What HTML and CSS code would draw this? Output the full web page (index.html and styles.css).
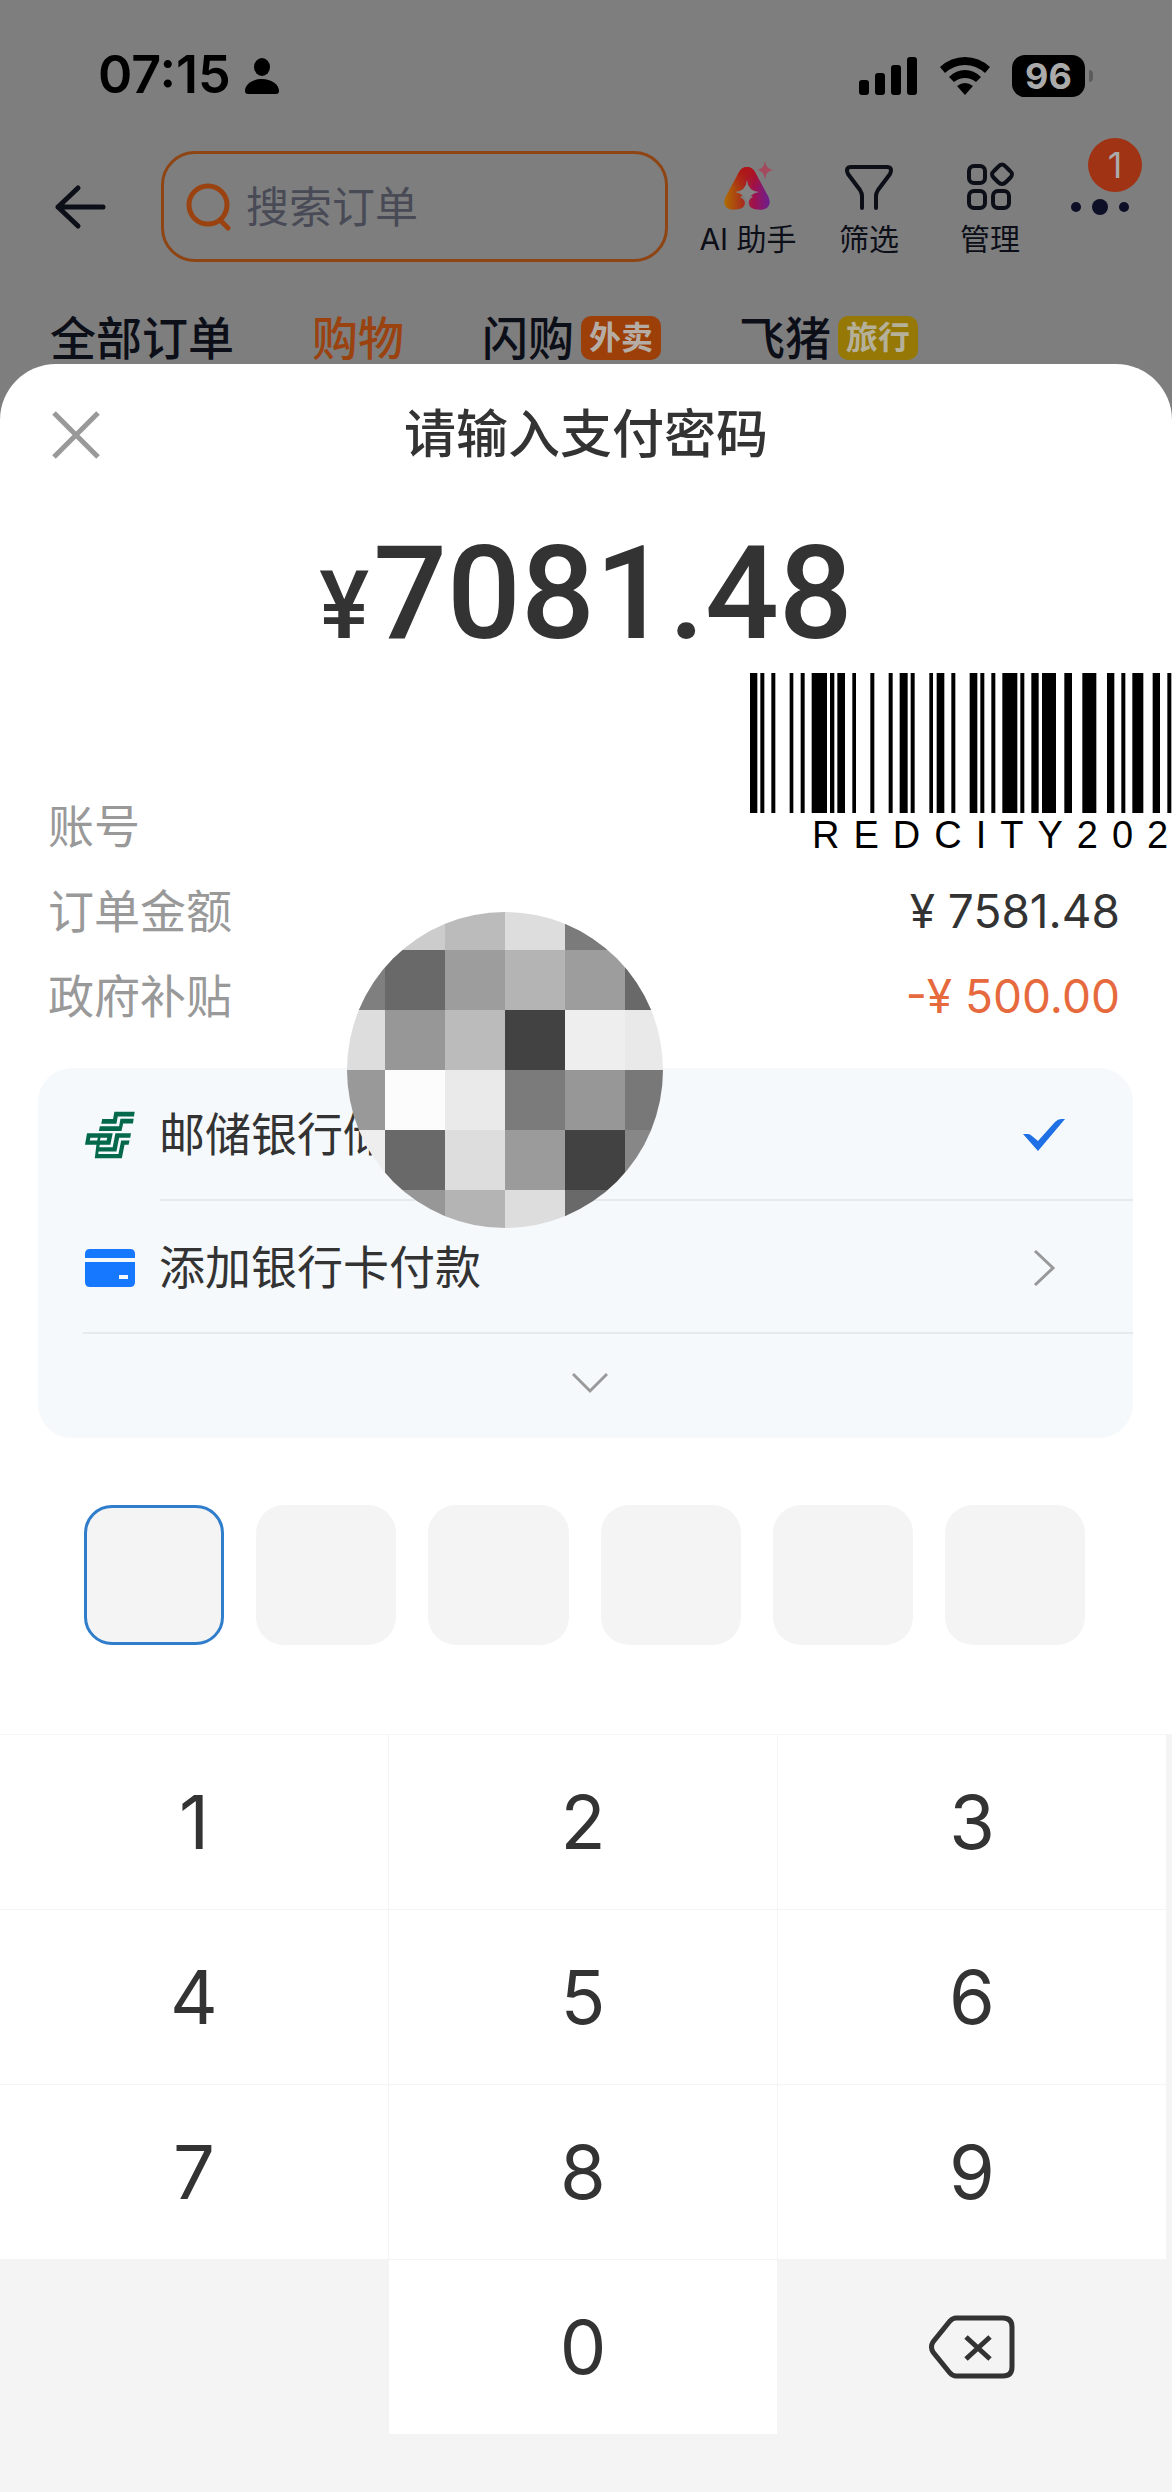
FILE: index.html
```
<!DOCTYPE html>
<html lang="zh-CN">
    <head>
        <meta charset="UTF-8">
        <meta name="viewport" content="width=device-width, initial-scale=1">
        <title>请输入支付密码</title>
        <link rel="stylesheet" href="styles.css">
    </head>
    <body>
        <header class="orders">
            <div class="status">
                <span class="time">07:15</span>
                <svg class="person" width="34" height="36" viewBox="0 0 34 36"><ellipse cx="17" cy="9" rx="8" ry="9"/><path d="M3 36Q0 36 0 33C0 26 8 21 17 21S34 26 34 33Q34 36 31 36Z"/></svg>
                <div class="status-right">
                    <svg width="59" height="38" viewBox="0 0 59 38"><rect x="0" y="23" width="10" height="15" rx="3"/><rect x="16" y="16" width="10" height="22" rx="3"/><rect x="32" y="8" width="10" height="30" rx="3"/><rect x="48" y="0" width="10" height="38" rx="3"/></svg>
                    <svg width="50" height="38" viewBox="0 0 50 38"><path d="M0 10Q11 0 25 0T50 10L45 16Q36 8 25 8T5 16Z"/><path d="M9 20Q16 13 25 13T41 20L36 25Q31 21 25 21T14 25Z"/><path d="M17 29Q25 23 33 29L25 38Z"/></svg>
                    <span class="battery">96</span>
                </div>
            </div>
            <div class="bar">
                <button class="icon-btn" aria-label="返回">
                    <svg width="54" height="46" viewBox="0 0 54 46" fill="none" stroke="#0c0e18" stroke-width="5" stroke-linecap="round" stroke-linejoin="round"><path d="M50 23H5M25 4L5 23L25 42"/></svg>
                </button>
                <label class="search">
                    <svg width="46" height="48" viewBox="0 0 46 48" fill="none" stroke="#9a4210" stroke-width="5" stroke-linecap="round"><circle cx="22" cy="22" r="19"/><path d="M35 38L42 45"/></svg>
                    <input type="search" placeholder="搜索订单" aria-label="搜索订单">
                </label>
                <nav class="tools">
                    <button class="tool">
                        <svg width="50" height="50" viewBox="0 0 50 50">
                            <defs>
                                <linearGradient id="ai" x1="0" y1="1" x2="1" y2="1">
                                    <stop offset="0" stop-color="#b06c00"/><stop offset=".4" stop-color="#a8301a"/><stop offset=".65" stop-color="#a0104e"/><stop offset="1" stop-color="#6a2090"/>
                                </linearGradient>
                                <linearGradient id="aitop" x1="0" y1="0" x2="0" y2="1">
                                    <stop offset="0" stop-color="#b01216"/><stop offset="1" stop-color="#b01216" stop-opacity="0"/>
                                </linearGradient>
                            </defs>
                            <path fill="url(#ai)" d="M24 6Q29 6 32 11L45 35Q49 43 44 47Q39 50 31 48Q25 46 26 40Q27 37 30 36Q26 34 24 26Q22 34 17 36Q21 38 22 41Q22 47 16 48Q8 50 4 47Q-1 43 3 35L16 11Q19 6 24 6Z"/>
                            <path fill="url(#aitop)" d="M24 6Q29 6 32 11L39 25Q28 30 24 22Q20 30 9 25L16 11Q19 6 24 6Z"/>
                            <path fill="#858585" d="M24 19Q25 30 36 31Q25 33 24 43Q23 33 12 31Q23 30 24 19Z"/>
                            <path fill="#a44a5e" d="M42 0Q43 8 50 9Q43 10 42 18Q41 10 34 9Q41 8 42 0Z"/>
                        </svg>
                        <span>AI 助手</span>
                    </button>
                    <button class="tool">
                        <svg width="50" height="50" viewBox="0 0 50 50" fill="none" stroke="#0c0e18" stroke-width="4" stroke-linecap="round" stroke-linejoin="round"><path d="M18 47V35Q18 32 16 29L4 13Q1 6 7 6H43Q49 6 46 13L34 29Q32 32 32 35V47"/></svg>
                        <span>筛选</span>
                    </button>
                    <button class="tool">
                        <svg width="50" height="50" viewBox="0 0 50 50" fill="none" stroke="#0c0e18" stroke-width="4"><rect x="4" y="5" width="16" height="17" rx="5"/><rect x="4" y="30" width="16" height="17" rx="5"/><rect x="28" y="30" width="16" height="17" rx="5"/><path d="M33 6Q37 1 41 6L45 10Q49 13 45 17L41 21Q37 25 33 21L29 17Q25 13 29 10Z"/></svg>
                        <span>管理</span>
                    </button>
                </nav>
                <button class="icon-btn more" aria-label="更多">
                    <svg width="64" height="20" viewBox="0 0 64 20" fill="#0c0f26"><circle cx="8" cy="10" r="5"/><circle cx="32" cy="10" r="8"/><circle cx="56" cy="10" r="5"/></svg>
                    <span class="count">1</span>
                </button>
            </div>
            <nav class="tabs">
                <a href="#">全部订单</a>
                <a href="#" class="active">购物</a>
                <a href="#">闪购<span class="tag">外卖</span></a>
                <a href="#">飞猪<span class="tag tag-travel">旅行</span></a>
            </nav>
        </header>

        <main class="sheet">
            <div class="sheet-head">
                <button class="icon-btn" aria-label="关闭">
                    <svg width="48" height="48" viewBox="0 0 48 48" stroke="#999" stroke-width="5"><path d="M2 2L46 46M46 2L2 46"/></svg>
                </button>
                <h1>请输入支付密码</h1>
            </div>
            <p class="amount"><span class="yen">¥</span>7081.48</p>

            <div class="details">
                <dl>
                    <div><dt>账号</dt><dd></dd></div>
                    <div><dt>订单金额</dt><dd>¥ 7581.48</dd></div>
                    <div><dt>政府补贴</dt><dd class="minus">-¥ 500.00</dd></div>
                </dl>
                <div class="barcode">
                    <svg width="422" height="140" viewBox="0 0 1266 420" aria-hidden="true"><path d="M0 0h22v420h-22zM31 0h12v420h-12zM64 0h12v420h-12zM119 0h11v420h-11zM152 0h12v420h-12zM185 0h46v420h-46zM240 0h13v420h-13zM262 0h23v420h-23zM307 0h11v420h-11zM361 0h12v420h-12zM416 0h12v420h-12zM449 0h24v420h-24zM482 0h12v420h-12zM538 0h11v420h-11zM560 0h23v420h-23zM604 0h12v420h-12zM659 0h23v420h-23zM691 0h12v420h-12zM724 0h12v420h-12zM757 0h45v420h-45zM811 0h12v420h-12zM844 0h22v420h-22zM876 0h42v420h-42zM943 0h23v420h-23zM997 0h42v420h-42zM1071 0h22v420h-22zM1114 0h12v420h-12zM1147 0h33v420h-33zM1208 0h22v420h-22zM1252 0h12v420h-12z"/></svg>
                    <p>REDCITY20<span>2</span></p>
                </div>
            </div>

            <div class="methods">
                <button class="method">
                    <svg width="50" height="48" viewBox="46 48 148 142" fill="#04694a"><path d="M133 50H193L191 64H143L139 86H94L97 72H129Z"/><path d="M151 71H190L188 85H159L154 107H87L90 93H147Z"/><path fill-rule="evenodd" d="M52 114H128L121 148H46ZM62 127L60 135H82L84 127ZM92 127L90 135H110L112 127Z"/><path d="M136 114H182L180 127H147L139 168H84L86 155H128Z"/><path d="M153 135H178L175 148H163L155 188H75L80 146H90L85 175H145Z"/></svg>
                    <span>邮储银行储</span>
                    <svg class="end" width="44" height="34" viewBox="0 0 44 34" fill="#1f6fe5"><path d="M1 16H6Q8 16 10 18L16 23L33 4Q36 1 39 1H43L16 33Z"/></svg>
                </button>
                <button class="method">
                    <svg width="50" height="38" viewBox="0 0 50 38" fill="#1677ff"><path d="M0 9V5Q0 0 5 0H45Q50 0 50 5V9Z"/><path fill-rule="evenodd" d="M0 13H50V33Q50 38 45 38H5Q0 38 0 33ZM34 26V30H43V26Z"/></svg>
                    <span>添加银行卡付款</span>
                    <svg class="end" width="44" height="36" viewBox="0 0 44 36" fill="none" stroke="#999" stroke-width="3"><path d="M13 1L31 18L13 35"/></svg>
                </button>
                <button class="expand" aria-label="展开">
                    <svg width="36" height="22" viewBox="0 0 36 22" fill="none" stroke="#999" stroke-width="3"><path d="M1 2L18 19L35 2"/></svg>
                </button>
                <svg class="mosaic" width="316" height="316" viewBox="0 0 316 316" aria-hidden="true">
                    <clipPath id="round"><circle cx="158" cy="158" r="158"/></clipPath>
                    <g clip-path="url(#round)" shape-rendering="crispEdges">
                        <path fill="#ccc" d="M38 0h60v38h-60z"/><path fill="#bbb" d="M98 0h60v38h-60z"/><path fill="#ddd" d="M158 0h60v38h-60z"/><path fill="#7b7b7b" d="M218 0h60v38h-60z"/>
                        <path fill="#7f7f7f" d="M0 38h38v60h-38z"/><path fill="#696969" d="M38 38h60v60h-60z"/><path fill="#9d9d9d" d="M98 38h60v60h-60z"/><path fill="#b4b4b4" d="M158 38h60v60h-60z"/><path fill="#9d9d9d" d="M218 38h60v60h-60z"/><path fill="#696969" d="M278 38h38v60h-38z"/>
                        <path fill="#ddd" d="M0 98h38v60h-38z"/><path fill="#979797" d="M38 98h60v60h-60z"/><path fill="#bbb" d="M98 98h60v60h-60z"/><path fill="#424242" d="M158 98h60v60h-60z"/><path fill="#eee" d="M218 98h60v60h-60z"/><path fill="#e9e9e9" d="M278 98h38v60h-38z"/>
                        <path fill="#999" d="M0 158h38v60h-38z"/><path fill="#fcfcfc" d="M38 158h60v60h-60z"/><path fill="#eaeaea" d="M98 158h60v60h-60z"/><path fill="#7b7b7b" d="M158 158h60v60h-60z"/><path fill="#979797" d="M218 158h60v60h-60z"/><path fill="#787878" d="M278 158h38v60h-38z"/>
                        <path fill="#eee" d="M0 218h38v60h-38z"/><path fill="#696969" d="M38 218h60v60h-60z"/><path fill="#ddd" d="M98 218h60v60h-60z"/><path fill="#9b9b9b" d="M158 218h60v60h-60z"/><path fill="#424242" d="M218 218h60v60h-60z"/><path fill="#878787" d="M278 218h38v60h-38z"/>
                        <path fill="#979797" d="M38 278h60v38h-60z"/><path fill="#b4b4b4" d="M98 278h60v38h-60z"/><path fill="#ddd" d="M158 278h60v38h-60z"/><path fill="#696969" d="M218 278h60v38h-60z"/>
                    </g>
                </svg>
            </div>

            <form class="pin">
                <input type="password" maxlength="1" inputmode="numeric" aria-label="密码第1位" class="current">
                <input type="password" maxlength="1" inputmode="numeric" aria-label="密码第2位">
                <input type="password" maxlength="1" inputmode="numeric" aria-label="密码第3位">
                <input type="password" maxlength="1" inputmode="numeric" aria-label="密码第4位">
                <input type="password" maxlength="1" inputmode="numeric" aria-label="密码第5位">
                <input type="password" maxlength="1" inputmode="numeric" aria-label="密码第6位">
            </form>

            <div class="keypad">
                <button>1</button>
                <button>2</button>
                <button>3</button>
                <button>4</button>
                <button>5</button>
                <button>6</button>
                <button>7</button>
                <button>8</button>
                <button>9</button>
                <button class="zero">0</button>
                <button class="delete" aria-label="删除">
                    <svg width="86" height="64" viewBox="0 0 86 64" fill="none" stroke="#333" stroke-width="5"><path d="M27 3H74Q83 3 83 12V52Q83 61 74 61H27Q24 61 21 58L4 37Q1 32 4 27L21 6Q24 3 27 3Z"/><path d="M37 22L61 44M61 22L37 44"/></svg>
                </button>
            </div>
        </main>
    </body>
</html>
```
FILE: styles.css
```
* {
    box-sizing: border-box;
}
body {
    margin: 0;
    min-height: 100vh;
    display: flex;
    flex-direction: column;
    background: #7e7e7e;
    color: #333;
    font-family: Inter, "Noto Sans CJK SC", sans-serif;
    line-height: 1.2;
}
button {
    border: 0;
    padding: 0;
    background: none;
    color: inherit;
    font: inherit;
    cursor: pointer;
}
svg {
    display: block;
    flex: none;
}

/* orders page behind the sheet */
.status {
    display: flex;
    align-items: center;
    height: 151px;
    padding: 0 80px 0 98px;
    color: #000;
}
.time {
    font-size: 52px;
    font-weight: 600;
}
.person {
    margin-left: 14px;
}
.status-right {
    display: flex;
    align-items: center;
    gap: 22px;
    margin-left: auto;
}
.battery {
    position: relative;
    width: 73px;
    margin-right: 7px;
    border-radius: 13px;
    background: #000;
    color: #aaa;
    font-size: 36px;
    font-weight: 700;
    line-height: 42px;
    text-align: center;
}
.battery::after {
    content: "";
    position: absolute;
    top: 15px;
    right: -8px;
    width: 4px;
    height: 12px;
    border-radius: 0 4px 4px 0;
    background: #5c5c5c;
}
.bar {
    display: flex;
    align-items: center;
    height: 111px;
    padding: 0 40px 0 53px;
    color: #0c0e18;
}
.search {
    display: flex;
    flex: 1;
    align-items: center;
    gap: 14px;
    min-width: 0;
    height: 111px;
    margin: 0 34px 0 54px;
    padding: 0 22px;
    border: 3px solid #8f4414;
    border-radius: 34px;
}
.search input {
    flex: 1;
    min-width: 0;
    border: 0;
    padding: 0;
    outline: none;
    background: none;
    font: 43px Inter, "Noto Sans CJK SC", sans-serif;
}
.search input::placeholder {
    color: #484a56;
}
.tools {
    display: flex;
    gap: 29px;
}
.tool {
    display: flex;
    flex-direction: column;
    align-items: center;
    gap: 10px;
    width: 92px;
    padding-top: 4px;
    font-size: 30px;
    line-height: 36px;
    white-space: nowrap;
}
.more {
    position: relative;
    margin-left: 32px;
}
.count {
    position: absolute;
    right: -10px;
    bottom: 25px;
    width: 54px;
    border-radius: 50%;
    background: #a03314;
    color: #aaa;
    font-size: 36px;
    line-height: 54px;
}
.tabs {
    display: flex;
    gap: 78px;
    padding: 50px 50px 0;
    font-size: 46px;
    font-weight: 500;
    line-height: 52px;
}
.tabs a {
    display: flex;
    align-items: center;
    color: #0c0e18;
    text-decoration: none;
    white-space: nowrap;
}
.tabs .active {
    color: #9a4210;
}
.tag {
    margin-left: 7px;
    padding: 0 8px;
    border-radius: 10px;
    background: #9c3f08;
    color: #b5ada5;
    font-size: 32px;
    font-weight: 700;
    line-height: 44px;
}
.tag-travel {
    background: #967806;
    color: #b5b09a;
}

/* payment sheet */
.sheet {
    position: relative;
    display: flex;
    flex: 1;
    flex-direction: column;
    border-radius: 56px 56px 0 0;
    background: #fff;
    overflow: hidden;
}
.sheet-head {
    display: grid;
    grid-template-columns: 48px 1fr 48px;
    align-items: center;
    height: 142px;
    padding: 0 52px;
}
h1 {
    margin: 0;
    font-size: 52px;
    font-weight: 500;
    text-align: center;
}
.amount {
    margin: 0 0 106px;
    padding-top: 4px;
    font-family: Roboto, sans-serif;
    font-size: 130px;
    font-weight: 500;
    line-height: 168px;
    text-align: center;
}
.yen {
    margin-right: 4px;
    font-size: 94px;
    line-height: 1;
}
.details {
    position: relative;
    padding: 0 52px 0 48px;
}
.details dl {
    margin: 0;
}
.details dl div {
    display: flex;
    justify-content: space-between;
    align-items: center;
    height: 85px;
    font-size: 46px;
}
.details dt {
    color: #999;
}
.details dd {
    margin: 0;
}
.details .minus {
    color: #e66a3e;
}
.barcode {
    position: absolute;
    top: -111px;
    right: 0;
    color: #000;
}
.barcode p {
    margin: 0;
    padding-left: 62px;
    font-family: "Liberation Sans", Arial, sans-serif;
    font-size: 38px;
    letter-spacing: 14px;
    line-height: 44px;
    white-space: nowrap;
}
.barcode span {
    letter-spacing: 0;
}
.methods {
    position: relative;
    margin: 29px 39px 0 38px;
    border-radius: 34px;
    background: #f5f9fc;
}
.method {
    position: relative;
    display: flex;
    align-items: center;
    gap: 24px;
    width: 100%;
    height: 133px;
    padding: 0 67px 0 47px;
    font-size: 46px;
}
.method::after {
    content: "";
    position: absolute;
    right: 0;
    bottom: 0;
    left: 122px;
    border-bottom: 2px solid #e6eaed;
}
.method + .method::after {
    left: 45px;
}
.end {
    margin-left: auto;
}
.expand {
    display: flex;
    justify-content: center;
    align-items: center;
    width: 100%;
    height: 104px;
    padding: 0 0 6px 8px;
}
.mosaic {
    position: absolute;
    top: -156px;
    left: 309px;
}
.pin {
    display: grid;
    grid-template-columns: repeat(6, 1fr);
    gap: 32px;
    margin: 67px 87px 89px 84px;
}
.pin input {
    width: 100%;
    height: 140px;
    border: 0;
    border-radius: 28px;
    padding: 0;
    outline: none;
    background: #f4f4f4;
    font-size: 64px;
    text-align: center;
}
.pin .current {
    border: 3px solid #2f7dcb;
}
.keypad {
    display: grid;
    flex: 1;
    grid-template-columns: repeat(3, 1fr);
    grid-auto-rows: 174px;
    align-content: start;
    gap: 1px;
    padding-right: 6px;
    padding-bottom: 56px;
    border-top: 1px solid #f6f6f6;
    background: #f4f4f4;
}
.keypad button {
    background: #fff;
    font-size: 74px;
}
.keypad .zero {
    grid-column: 2;
}
.keypad .delete {
    display: flex;
    justify-content: center;
    align-items: center;
    background: none;
}
```
